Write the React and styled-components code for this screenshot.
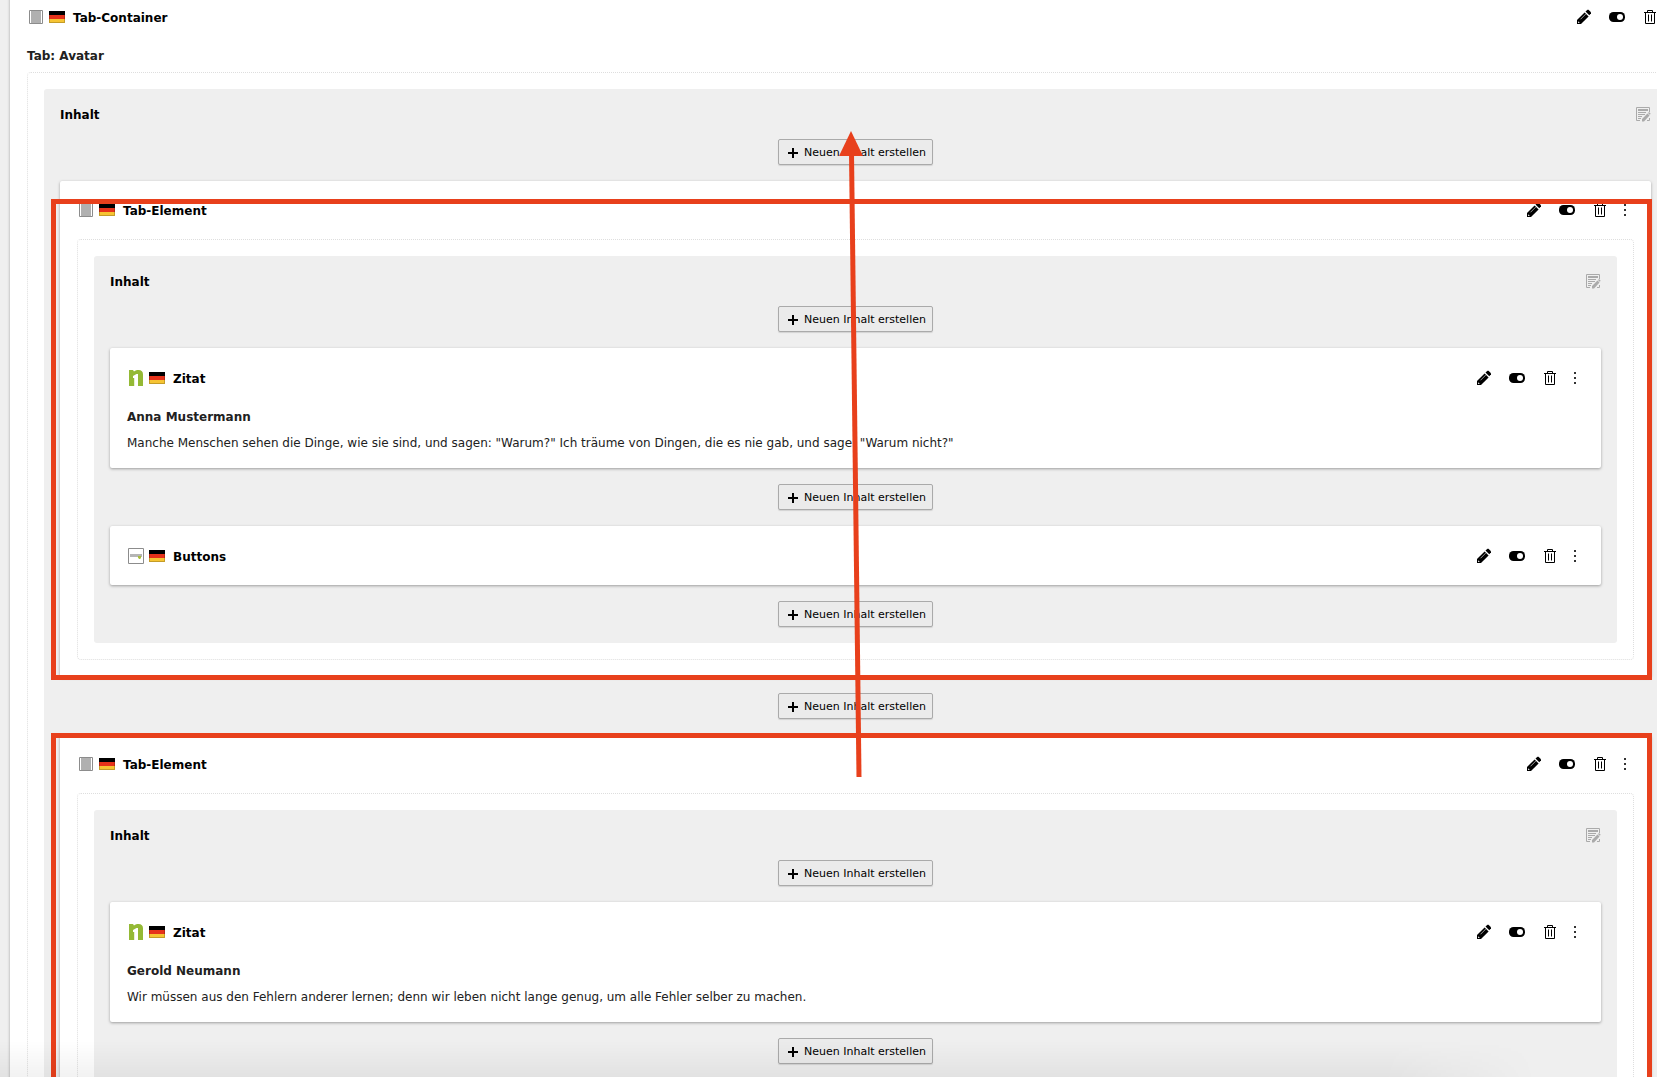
import React from 'react';
import styled, { createGlobalStyle } from 'styled-components';

const GlobalStyle = createGlobalStyle`
  * {
    box-sizing: border-box;
  }

  body {
    margin: 0;
    background: #efefef;
    color: #212121;
    font-family: 'DejaVu Sans', Verdana, sans-serif;
    font-size: 12px;
    line-height: 20px;
  }

  #root {
    height: 100vh;
    overflow: hidden;
  }
`;

const Page = styled.main`
  position: relative;
  height: 100vh;
  padding-left: 10px;
  overflow: hidden;
`;

/* the outer element is scrolled a bit and runs out of the window */
const Scrolled = styled.div`
  margin-top: -13px;
  margin-right: -44px;
`;

const Card = styled.article`
  position: relative;
  padding-bottom: ${({ $container }) => ($container ? '17px' : '0')};
  background: #fff;
  border-radius: 2px;
  box-shadow: 0 1px 3px rgba(0, 0, 0, 0.35);
`;

const CardHeader = styled.header`
  display: flex;
  align-items: center;
  justify-content: space-between;
  height: ${({ $container }) => ($container ? '58px' : '59px')};
  padding: 0 18px;
`;

const TitleGroup = styled.div`
  display: flex;
  align-items: center;
  gap: 5px;
`;

const Title = styled.h3`
  margin: 0 0 0 3px;
  padding-top: 2px;
  color: #000;
  font-size: 12px;
  line-height: 18px;
`;

const Actions = styled.div`
  display: flex;
  gap: 1px;
`;

const IconButton = styled.button`
  display: flex;
  align-items: center;
  justify-content: center;
  width: ${({ $narrow }) => ($narrow ? '16px' : '32px')};
  height: 20px;
  padding: 0;
  border: none;
  background: none;
  color: #000;
  cursor: pointer;
`;

const CardBody = styled.div`
  display: flex;
  flex-direction: column;
  gap: 6px;
  padding: 0 17px 15px;
`;

const TabLabel = styled(CardBody)`
  padding-bottom: 6px;
`;

const Text = styled.p`
  margin: 0;
  font-weight: ${({ $bold }) => ($bold ? 'bold' : 'normal')};
`;

const DottedBox = styled.div`
  margin: 0 17px;
  padding: 16px;
  border: 1px dotted #dedede;
  border-radius: 4px;
`;

const Column = styled.section`
  display: flex;
  flex-direction: column;
  gap: 16px;
  padding: 16px;
  background: #efefef;
  border-radius: 3px;
`;

const ColumnHeader = styled.div`
  display: flex;
  align-items: center;
  justify-content: space-between;
  height: 18px;
`;

const ColumnTitle = styled.h2`
  margin: 0;
  padding-top: 2px;
  color: #000;
  font-size: 12px;
  line-height: 18px;
`;

const EditColumnButton = styled(IconButton)`
  width: 16px;
  height: 18px;
  color: #aaa;
`;

const NewButton = styled.button`
  display: flex;
  align-items: center;
  align-self: center;
  gap: 6px;
  height: 26px;
  padding: 1px 6px 0 9px;
  border: 1px solid #aaa;
  border-radius: 2px;
  background: #ebebeb;
  box-shadow: 0 1px 1px rgba(0, 0, 0, 0.12);
  color: #000;
  font-family: inherit;
  font-size: 11px;
  line-height: 16px;
  white-space: nowrap;
  cursor: pointer;
`;

const Highlight = styled.div`
  position: absolute;
  top: ${({ $top }) => $top};
  right: -1px;
  bottom: -3px;
  left: -9px;
  border: 5px solid #e8401c;
  pointer-events: none;
`;

const Arrow = styled.svg`
  position: absolute;
  top: 131px;
  left: 839px;
  pointer-events: none;
`;

const BottomShade = styled.div`
  position: absolute;
  right: 120px;
  bottom: 0;
  left: 0;
  height: 36px;
  background: linear-gradient(to bottom, rgba(0, 0, 0, 0), rgba(0, 0, 0, 0.05));
  mask-image: linear-gradient(to right, #000 90%, transparent);
  pointer-events: none;
`;

const PencilIcon = () => (
  <svg width="16" height="16" viewBox="0 0 16 16" aria-hidden="true">
    <path d="M1 15v-4l7.600-7.600 4 4L5 15z" fill="currentColor" />
    <path d="M9.500 2.500 11.500.800h1l2.500 2.500v1l-1.700 2z" fill="currentColor" />
    <path d="m4.500 10.300 5.200-5.200" stroke="#999" strokeWidth="1" />
    <path d="M2 12.200 3.800 14H2.500L2 13.500z" fill="#fff" />
  </svg>
);

const ToggleIcon = () => (
  <svg width="16" height="16" viewBox="0 0 16 16" aria-hidden="true">
    <rect y="3" width="16" height="10" rx="4.500" fill="currentColor" />
    <circle cx="11" cy="8" r="3" fill="#fff" />
  </svg>
);

const TrashIcon = () => (
  <svg width="16" height="16" viewBox="0 0 16 16" fill="none" stroke="currentColor" aria-hidden="true">
    <path d="M2 3.500h12M5.500 3V1.500h5V3M3.500 4v10.500h9V4M6.500 5.500v7M9.500 5.500v7" />
  </svg>
);

const DotsIcon = () => (
  <svg width="16" height="16" viewBox="0 0 16 16" fill="#333" aria-hidden="true">
    <path d="M7 2h2v2H7zM7 7h2v2H7zM7 12h2v2H7z" />
  </svg>
);

const PlusIcon = () => (
  <svg width="10" height="10" viewBox="0 0 10 10" aria-hidden="true">
    <path d="M4 0h2v4h4v2H6v4H4V6H0V4h4z" fill="currentColor" />
  </svg>
);

const FlagIcon = () => (
  <svg width="16" height="12" viewBox="0 0 16 12" role="img" aria-label="Deutsch">
    <path d="M0 0h16v4H0z" fill="#000" />
    <path d="M0 4h16v4H0z" fill="#e6321a" />
    <path d="M0 8h16v4H0z" fill="#f6c433" />
    <path d="M.500 4v7.500h15V4" fill="none" stroke="#000" strokeOpacity=".2" />
  </svg>
);

const ContainerIcon = () => (
  <svg width="16" height="16" viewBox="0 0 16 16" aria-hidden="true">
    <path d="M1.500 1.500h13v13h-13z" fill="#fff" stroke="#8c8c8c" />
    <path d="M3 2h10v12H3z" fill="#b0b0b0" />
  </svg>
);

const QuoteIcon = () => (
  <svg width="16" height="16" viewBox="0 0 16 16" aria-hidden="true">
    <path d="M1 0h4l1 1.500C7.500.300 9 0 10.500 0 13.500 0 15 1.500 15 4.500V16h-5V4H8.500L5 6v2h1.200v8H1z" fill="#94b935" />
  </svg>
);

const ButtonsIcon = () => (
  <svg width="16" height="16" viewBox="0 0 16 16" aria-hidden="true">
    <path d="M.500.500h15v15H.500z" fill="#fff" stroke="#8c8c8c" />
    <path d="M2 6h12v3H2z" fill="#b5b5b5" />
    <path d="M10 8h3v2l-1 1h-1l-1-1.500z" fill="#a9bd3c" />
  </svg>
);

const EditColumnIcon = () => (
  <svg width="16" height="16" viewBox="0 0 16 16" aria-hidden="true">
    <path d="M14.500 6V1.500h-13v13H5M12 14.500h2.500V12" fill="none" stroke="currentColor" />
    <path d="M3 3h10v2H3zM3 6h8v1H3zM3 8h7v1H3zM3 10h4v1H3zM3 12h3v1H3z" fill="currentColor" />
    <path d="m7 13 5.500-5.500 2 2L9 15.500H7zM13 7l1-1 1.700 1.700-1 1z" fill="currentColor" />
  </svg>
);

const icons = {
  container: ContainerIcon,
  quote: QuoteIcon,
  buttons: ButtonsIcon,
};

const ElementHeader = ({ icon, title, container }) => {
  const Icon = icons[icon];

  return (
    <CardHeader $container={container}>
      <TitleGroup>
        <Icon />
        <FlagIcon />
        <Title>{title}</Title>
      </TitleGroup>
      <Actions>
        <IconButton type="button" aria-label="Bearbeiten"><PencilIcon /></IconButton>
        <IconButton type="button" aria-label="Deaktivieren"><ToggleIcon /></IconButton>
        <IconButton type="button" aria-label="Löschen"><TrashIcon /></IconButton>
        <IconButton type="button" aria-label="Mehr" $narrow><DotsIcon /></IconButton>
      </Actions>
    </CardHeader>
  );
};

const NewContent = () => (
  <NewButton type="button">
    <PlusIcon />
    Neuen Inhalt erstellen
  </NewButton>
);

// every element has a button above it, nested columns also end with one
const ContentColumn = ({ children, nested }) => (
  <DottedBox>
    <Column>
      <ColumnHeader>
        <ColumnTitle>Inhalt</ColumnTitle>
        <EditColumnButton type="button" aria-label="Spalte bearbeiten">
          <EditColumnIcon />
        </EditColumnButton>
      </ColumnHeader>
      {React.Children.map(children, (child) => (
        <>
          <NewContent />
          {child}
        </>
      ))}
      {nested && <NewContent />}
    </Column>
  </DottedBox>
);

const ContentElement = ({ icon, title, name, text }) => (
  <Card>
    <ElementHeader icon={icon} title={title} />
    {text && (
      <CardBody>
        <Text $bold>{name}</Text>
        <Text>{text}</Text>
      </CardBody>
    )}
  </Card>
);

const tabs = [
  {
    id: 1,
    highlightTop: '18px',
    elements: [
      {
        icon: 'quote',
        title: 'Zitat',
        name: 'Anna Mustermann',
        text: 'Manche Menschen sehen die Dinge, wie sie sind, und sagen: "Warum?" Ich träume von Dingen, die es nie gab, und sage: "Warum nicht?"',
      },
      { icon: 'buttons', title: 'Buttons' },
    ],
  },
  {
    id: 2,
    highlightTop: '-2px',
    elements: [
      {
        icon: 'quote',
        title: 'Zitat',
        name: 'Gerold Neumann',
        text: 'Wir müssen aus den Fehlern anderer lernen; denn wir leben nicht lange genug, um alle Fehler selber zu machen.',
      },
    ],
  },
];

const App = () => {
  return (
    <>
      <GlobalStyle />
      <Page>
        <Scrolled>
          <Card $container>
            <ElementHeader icon="container" title="Tab-Container" />
            <TabLabel>
              <Text $bold>Tab: Avatar</Text>
            </TabLabel>
            <ContentColumn>
              {tabs.map((tab) => (
                <Card key={tab.id} $container>
                  <ElementHeader icon="container" title="Tab-Element" container />
                  <ContentColumn nested>
                    {tab.elements.map((element) => (
                      <ContentElement key={element.title} {...element} />
                    ))}
                  </ContentColumn>
                  <Highlight $top={tab.highlightTop} />
                </Card>
              ))}
            </ContentColumn>
          </Card>
        </Scrolled>
        <BottomShade />
        <Arrow width="26" height="646" viewBox="0 0 26 646" aria-hidden="true">
          <path d="M12.500 22 20 646" stroke="#e8401c" strokeWidth="5" />
          <path d="M12 0 24 25H0z" fill="#e8401c" />
        </Arrow>
      </Page>
    </>
  );
};

export default App;
